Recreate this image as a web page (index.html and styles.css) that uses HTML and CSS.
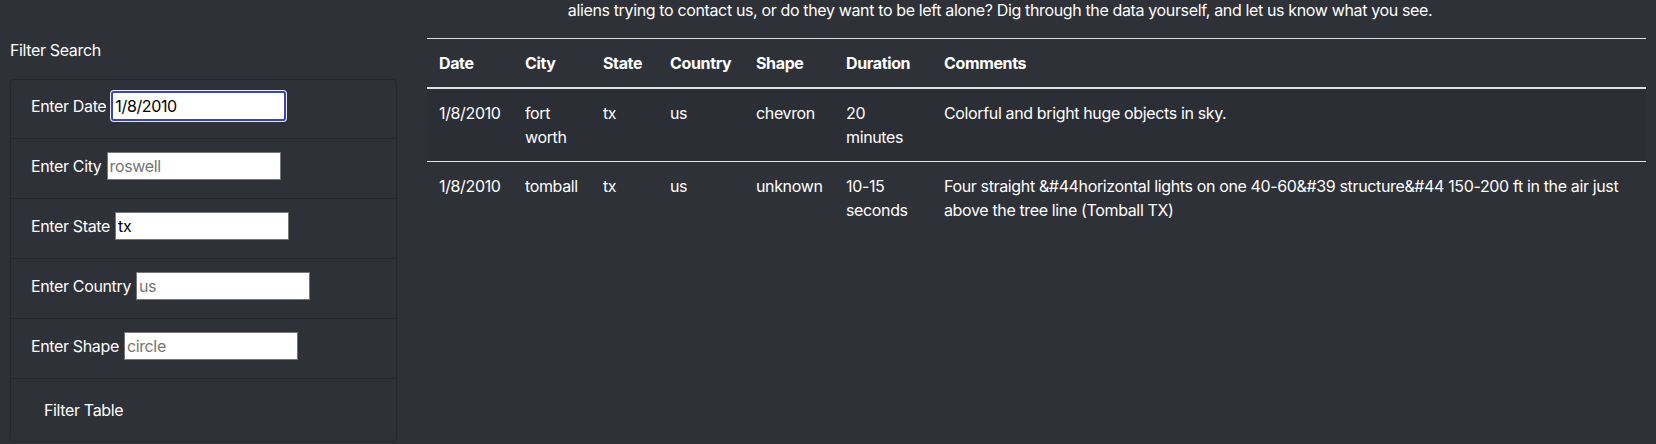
FILE: index.html
```html
<!DOCTYPE html>
<html lang="en">
<head>
<meta charset="utf-8">
<title>UFO Sightings</title>
<link rel="stylesheet" href="styles.css">
</head>
<body>
<div class="intro">
  <p>aliens trying to contact us, or do they want to be left alone? Dig through the data yourself, and let us know what you see.</p>
</div>
<div class="layout">
  <aside class="sidebar">
    <div class="sidebar-title">Filter Search</div>
    <ul class="filter-card">
      <li class="filter-item first">
        <label class="filter-row">Enter Date <input class="filter-input focused" type="text" value="1/8/2010"></label>
      </li>
      <li class="filter-item">
        <label class="filter-row">Enter City <input class="filter-input" type="text" placeholder="roswell"></label>
      </li>
      <li class="filter-item">
        <label class="filter-row">Enter State <input class="filter-input" type="text" value="tx"></label>
      </li>
      <li class="filter-item">
        <label class="filter-row">Enter Country <input class="filter-input" type="text" placeholder="us"></label>
      </li>
      <li class="filter-item">
        <label class="filter-row">Enter Shape <input class="filter-input" type="text" placeholder="circle"></label>
      </li>
      <li class="filter-item last">
        <button class="filter-btn" type="button">Filter Table</button>
      </li>
    </ul>
  </aside>
  <main class="results">
    <table class="ufo-table">
      <colgroup>
        <col class="c-date"><col class="c-city"><col class="c-state"><col class="c-country"><col class="c-shape"><col class="c-duration"><col class="c-comments">
      </colgroup>
      <thead>
        <tr><th>Date</th><th>City</th><th>State</th><th>Country</th><th>Shape</th><th>Duration</th><th>Comments</th></tr>
      </thead>
      <tbody>
        <tr class="striped"><td>1/8/2010</td><td>fort worth</td><td>tx</td><td>us</td><td>chevron</td><td>20 minutes</td><td>Colorful and bright huge objects in sky.</td></tr>
        <tr><td>1/8/2010</td><td>tomball</td><td>tx</td><td>us</td><td>unknown</td><td>10-15 seconds</td><td>Four straight &amp;#44horizontal lights on one 40-60&amp;#39 structure&amp;#44 150-200 ft in the air just above the tree line (Tomball TX)</td></tr>
      </tbody>
    </table>
  </main>
</div>
</body>
</html>
```

FILE: styles.css
```css
html, body {
  margin: 0;
  padding: 0;
  background: #2f3139;
  color: #ffffff;
  font-family: Inter, "Noto Sans", "Liberation Sans", sans-serif;
  font-size: 16px;
  line-height: 24px;
  letter-spacing: -0.36px;
  height: 444px;
  overflow: hidden;
}

.intro {
  padding-left: 344px;
  margin-top: -2px;
  margin-bottom: 16px;
}

.intro p {
  margin: 0;
  text-align: center;
}

.layout {
  display: grid;
  grid-template-columns: 387px 1fr;
  column-gap: 30px;
  padding: 0 10px;
}

.sidebar-title {
  line-height: 24px;
  margin-bottom: 17px;
}

.filter-card {
  list-style: none;
  margin: 0;
  padding: 0;
  border: 1px solid #26282d;
  border-radius: 4px;
}

.filter-item {
  padding: 12px 20px 17px;
  border-bottom: 1px solid #26282d;
}

.filter-item.first {
  padding-top: 11px;
}

.filter-item.last {
  border-bottom: none;
  padding-bottom: 12px;
}

.filter-row {
  display: flex;
  align-items: center;
  gap: 5px;
  height: 30px;
  white-space: nowrap;
}

.filter-input {
  box-sizing: border-box;
  width: 174px;
  height: 28px;
  margin: 0;
  padding: 1px 2px;
  border: 1px solid #767676;
  background: #ffffff;
  color: #000000;
  font-family: inherit;
  font-size: 16px;
  letter-spacing: -0.36px;
  outline: none;
}

.filter-input::placeholder {
  color: #757575;
}

.filter-input.focused {
  width: 175px;
  height: 30px;
  border: 2px solid #3a47b3;
  border-radius: 3px;
  box-shadow: 0 0 0 1px #e8eaf6;
}

.filter-btn {
  display: block;
  margin: 0;
  padding: 6px 12px;
  border: 1px solid transparent;
  background: transparent;
  color: #ffffff;
  font-family: inherit;
  font-size: 16px;
  letter-spacing: -0.36px;
  line-height: 24px;
}

.ufo-table {
  width: 100%;
  border-collapse: collapse;
  table-layout: fixed;
}

.c-date { width: 86px; }
.c-city { width: 78px; }
.c-state { width: 67px; }
.c-country { width: 86px; }
.c-shape { width: 90px; }
.c-duration { width: 98px; }

.ufo-table th,
.ufo-table td {
  padding: 12px;
  text-align: left;
  vertical-align: top;
  border-top: 1px solid #dee2e6;
  line-height: 24px;
}

.ufo-table th {
  font-weight: 700;
  border-bottom: 2px solid #dee2e6;
}

.ufo-table tbody tr:first-child td {
  border-top: none;
}

.ufo-table tr.striped td {
  background: rgba(0, 0, 0, 0.05);
}
```
